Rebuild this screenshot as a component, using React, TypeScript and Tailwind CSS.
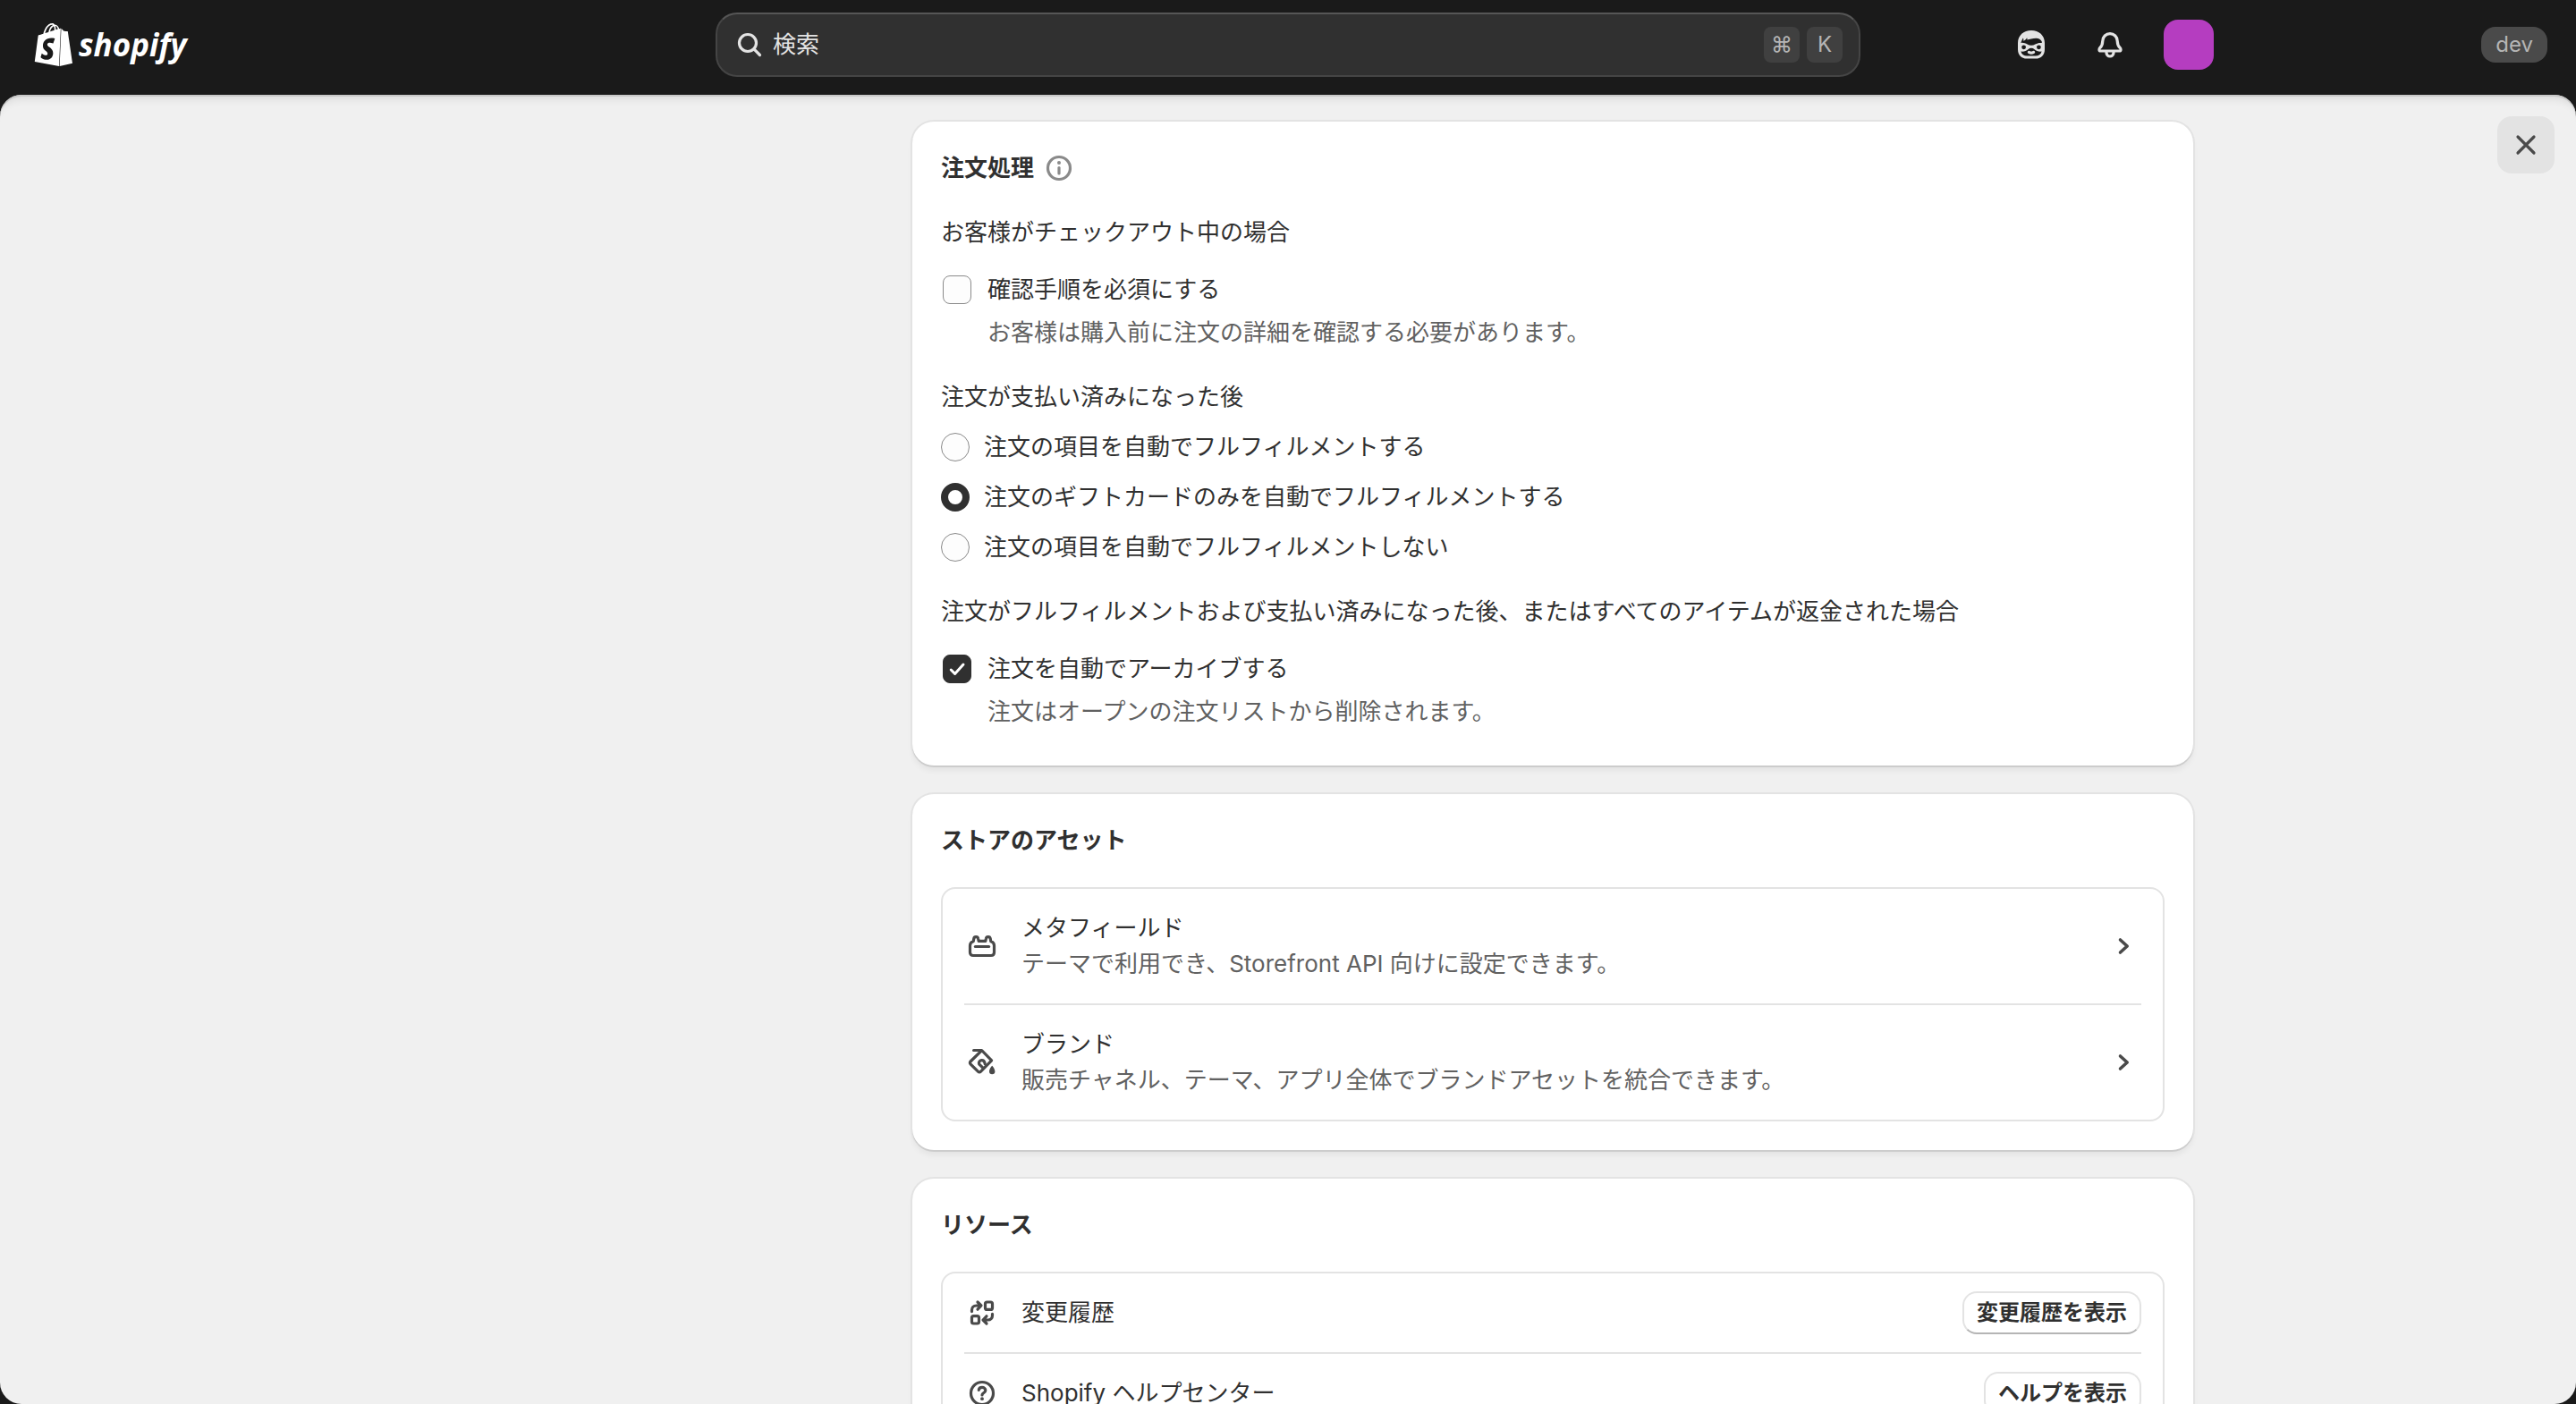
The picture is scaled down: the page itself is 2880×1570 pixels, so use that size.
import { useState } from "react";
import type { ReactNode } from "react";
import { SiShopify } from "react-icons/si";

const FULFILLMENT_OPTIONS = [
  { value: "all", label: "注文の項目を自動でフルフィルメントする" },
  { value: "gift-cards", label: "注文のギフトカードのみを自動でフルフィルメントする" },
  { value: "none", label: "注文の項目を自動でフルフィルメントしない" },
];

function Icon({ children, className = "" }: { children: ReactNode; className?: string }) {
  return (
    <svg
      viewBox="0 0 20 20"
      className={`w-10 h-10 shrink-0 ${className}`}
      fill="none"
      stroke="currentColor"
      strokeWidth="1.6"
      strokeLinecap="round"
      strokeLinejoin="round"
      aria-hidden="true"
    >
      {children}
    </svg>
  );
}

function SearchIcon() {
  return (
    <Icon>
      <circle cx="9" cy="9" r="4.75" />
      <path d="M12.6 12.6 15.75 15.75" />
    </Icon>
  );
}

function SidekickIcon() {
  return (
    <Icon>
      <path
        fill="currentColor"
        stroke="none"
        fillRule="evenodd"
        d="M10 2c4.3 0 7.5 2.8 7.5 7v3.6c0 3-2 5.2-5 5.2h-5c-3 0-5-2.2-5-5.2V9C2.5 4.800 5.700 2 10 2Z
          M4.100 8.900c.3-.5.6-1.500 1.300-2.700.300.500.300 1 .2 1.700.800-.3 1.500-.9 2-1.800.200.500.200.800.1 1.200 1.300-.2 3-.9 5-.9 1.600 0 2.600.7 3.200 1.900v.700c-1.400-.2-2.600.1-3.700.8-1.300.8-3.100.8-4.400 0C6.700 9.100 5.500 8.700 4.100 8.900Z
          M5.800 10.200a1.200 1.200 0 1 0 0 2.400 1.200 1.200 0 0 0 0-2.400Z
          M14.200 10.200a1.200 1.200 0 1 0 0 2.400 1.200 1.200 0 0 0 0-2.400Z
          M4.200 13.800c1.700.2 3-.3 4-1.200 1.100-.9 2.500-.9 3.600 0 1 .9 2.300 1.400 4 1.200-.4 1.600-1.700 2.500-3.500 2.500H7.700c-1.800 0-3.100-.9-3.500-2.500Z"
      />
      <path d="M8.700 14.200c.8.5 1.800.5 2.600 0" />
    </Icon>
  );
}

function BellIcon() {
  return (
    <Icon>
      <path d="M5.900 7.900a4.100 4.100 0 0 1 8.200 0c.1 2 .5 2.900 1.400 3.700.7.700.8 1.900-.3 1.900H4.800c-1.100 0-1-1.200-.3-1.900.9-.8 1.300-1.700 1.400-3.700Z" />
      <path d="M8 13.800v.7a2 2 0 0 0 4 0v-.7" />
    </Icon>
  );
}

function CloseIcon() {
  return (
    <Icon>
      <path d="M5.500 5.500l9 9M14.500 5.500l-9 9" />
    </Icon>
  );
}

function InfoIcon() {
  return (
    <Icon>
      <circle cx="10" cy="10" r="6.25" />
      <path d="M10 9.750v3.250" />
      <circle cx="10" cy="7" r="1" fill="currentColor" stroke="none" />
    </Icon>
  );
}

function MetafieldIcon() {
  return (
    <Icon>
      <path d="M5.100 7.400 5.400 5.800c.1-.6.5-1 1.100-1h.2c.6 0 1 .4 1.100 1l.3 1.400h3.800l.3-1.400c.1-.6.5-1 1.100-1h.2c.6 0 1 .4 1.100 1l.3 1.600c1.200.3 1.850 1.100 1.850 2.300v3.800c0 1.100-.7 1.750-1.750 1.750H5c-1.050 0-1.750-.65-1.750-1.750V9.700c0-1.200.65-2 1.850-2.300Z" />
      <path d="M6.200 10.250h7.600" />
    </Icon>
  );
}

function BrandIcon() {
  return (
    <Icon>
      <path d="M5.300 3.250h4.500l5.500 5.700-6 6.100c-.5.500-1.100.5-1.600 0L3.500 10.900c-.4-.4-.4-1 0-1.400l6.200-6.100" />
      <path d="M10.600 13.200 8.300 10.900c-.3-.9.300-2 1.300-2.100 1.100-.1 1.700.6 1.900 1.500l.1.600" />
      <path
        fill="currentColor"
        stroke="none"
        d="M15.600 11.900c.3 0 1.600 2.100 1.600 3.100a1.600 1.600 0 0 1-3.200 0c0-1 1.300-3.100 1.600-3.100Z"
      />
    </Icon>
  );
}

function ChangelogIcon() {
  return (
    <Icon>
      <rect x="11.75" y="4" width="4" height="4.2" rx="1" />
      <rect x="4.25" y="11.8" width="4" height="4.2" rx="1" />
      <path d="M4.250 9.300V8.500c0-1.500 1-2.500 2.500-2.500h2.500M7.500 4 9.500 6l-2 2.100" />
      <path d="M15.750 10.700v.8c0 1.500-1 2.500-2.500 2.500h-2.500M12.500 16l-2-2 2-2.100" />
    </Icon>
  );
}

function HelpIcon() {
  return (
    <Icon>
      <circle cx="10" cy="10" r="6.25" />
      <path d="M8.150 8.200c.1-1 .9-1.500 1.850-1.500 1.100 0 1.900.7 1.900 1.650 0 1.400-1.900 1.350-1.900 2.650" />
      <circle cx="10" cy="13.1" r=".95" fill="currentColor" stroke="none" />
    </Icon>
  );
}

function ChevronIcon() {
  return (
    <Icon>
      <path d="M8.250 6.500 12.100 10l-3.850 3.500" strokeWidth="1.8" />
    </Icon>
  );
}

function Header() {
  return (
    <header className="grid grid-cols-[1fr_minmax(0,1280px)_1fr] items-center pt-3.5 pb-5 text-[#e3e3e3]">
      <a href="#" aria-label="shopify" className="flex items-center gap-1 pl-9 text-white">
        <SiShopify className="w-12 h-12" />
        <span className="font-['Open_Sans',sans-serif] text-[35px] leading-[48px] font-bold italic">shopify</span>
      </a>

      {/* Search */}
      <div className="flex h-[72px] items-center gap-1.5 rounded-3xl border-2 border-[#454545] border-t-[#565656] bg-[#303030] pl-4 pr-[18px]">
        <SearchIcon />
        <input
          type="search"
          aria-label="検索"
          placeholder="検索"
          className="min-w-0 flex-1 bg-transparent outline-none placeholder:text-[#e3e3e3]"
        />
        <div className="flex gap-2 text-2xl text-[#b5b5b5]">
          <kbd className="flex h-10 w-10 items-center justify-center rounded-lg bg-[#404040] font-[Inter,sans-serif]">⌘</kbd>
          <kbd className="flex h-10 w-10 items-center justify-center rounded-lg bg-[#404040] font-[Inter,sans-serif]">K</kbd>
        </div>
      </div>

      <div className="flex items-center justify-between pl-[163px] pr-8">
        <div className="flex items-center gap-8">
          <button className="flex h-14 w-14 items-center justify-center" aria-label="Sidekick">
            <SidekickIcon />
          </button>
          <button className="flex h-14 w-14 items-center justify-center" aria-label="通知">
            <BellIcon />
          </button>
          <button className="h-14 w-14 rounded-2xl bg-[#b53dc0]" aria-label="アカウント" />
        </div>
        <span className="flex h-10 items-center rounded-2xl bg-[#4a4a4a] px-4 text-2xl text-[#b5b5b5]">dev</span>
      </div>
    </header>
  );
}

function Card({ title, info, children }: { title: string; info?: boolean; children: ReactNode }) {
  return (
    <section className="rounded-3xl bg-white p-8 shadow-[0_2px_0_0_#cccccc,0_0_0_2px_#e3e3e3,0_6px_6px_0_rgba(0,0,0,0.05)]">
      <div className="mb-8 flex items-center gap-2">
        <h2 className="font-bold">{title}</h2>
        {info && (
          <button className="text-[#8a8a8a]" aria-label="詳細">
            <InfoIcon />
          </button>
        )}
      </div>
      {children}
    </section>
  );
}

function Checkbox({ id, label, helpText, defaultChecked = false }: { id: string; label: string; helpText: string; defaultChecked?: boolean }) {
  const [checked, setChecked] = useState(defaultChecked);

  return (
    <div>
      <label htmlFor={id} className="flex items-center gap-4 py-2">
        <span className="grid w-9 place-items-center">
          <input
            id={id}
            type="checkbox"
            checked={checked}
            onChange={() => setChecked(!checked)}
            aria-describedby={`${id}-help`}
            className="col-start-1 row-start-1 h-8 w-8 appearance-none rounded-lg border border-[#8a8a8a] bg-[#fdfdfd] checked:border-[#303030] checked:bg-[#303030]"
          />
          {checked && (
            <svg viewBox="0 0 16 16" className="pointer-events-none col-start-1 row-start-1 h-8 w-8" fill="none" stroke="white" strokeWidth="1.5" strokeLinecap="round" strokeLinejoin="round">
              <path d="M4.600 8.500l2.200 2.200L11.500 5.500" />
            </svg>
          )}
        </span>
        {label}
      </label>
      <p id={`${id}-help`} className="pl-[52px] text-[#616161]">{helpText}</p>
    </div>
  );
}

function OrderProcessing() {
  const [fulfillment, setFulfillment] = useState("gift-cards");

  return (
    <Card title="注文処理" info>
      <div className="flex flex-col gap-8 pb-2">
        <div className="flex flex-col gap-4">
          <p>お客様がチェックアウト中の場合</p>
          <Checkbox id="confirm-step" label="確認手順を必須にする" helpText="お客様は購入前に注文の詳細を確認する必要があります。" />
        </div>

        <fieldset>
          <legend>注文が支払い済みになった後</legend>
          {FULFILLMENT_OPTIONS.map((option) => (
            <label key={option.value} className="mt-4 flex items-center gap-4">
              <input
                type="radio"
                name="fulfillment"
                value={option.value}
                checked={fulfillment === option.value}
                onChange={() => setFulfillment(option.value)}
                className="h-8 w-8 appearance-none rounded-full border border-[#8a8a8a] bg-[#fdfdfd] checked:border-8 checked:border-[#303030] checked:bg-white"
              />
              {option.label}
            </label>
          ))}
        </fieldset>

        <div className="flex flex-col gap-4">
          <p>注文がフルフィルメントおよび支払い済みになった後、またはすべてのアイテムが返金された場合</p>
          <Checkbox id="auto-archive" label="注文を自動でアーカイブする" helpText="注文はオープンの注文リストから削除されます。" defaultChecked />
        </div>
      </div>
    </Card>
  );
}

function AssetRow({ icon, title, description }: { icon: ReactNode; title: string; description: string }) {
  return (
    <a href="#" className="flex items-center py-6">
      <span className="mr-6 text-[#4a4a4a]">{icon}</span>
      <span className="flex-1">
        <span className="block">{title}</span>
        <span className="block text-[#616161]">{description}</span>
      </span>
      <span className="text-[#4a4a4a]">
        <ChevronIcon />
      </span>
    </a>
  );
}

function ResourceRow({ icon, title, action }: { icon: ReactNode; title: string; action: string }) {
  return (
    <div className="flex items-center py-5">
      <span className="mr-6 text-[#4a4a4a]">{icon}</span>
      <span className="flex-1">{title}</span>
      <button className="h-12 rounded-2xl border-2 border-[#e3e3e3] border-b-[#b5b5b5] bg-white px-3.5 text-2xl leading-10 font-bold">
        {action}
      </button>
    </div>
  );
}

function List({ children }: { children: ReactNode }) {
  return <div className="divide-y-2 divide-[#e3e3e3] rounded-2xl border-2 border-[#e3e3e3] px-6">{children}</div>;
}

export default function App() {
  return (
    <div className="flex h-screen flex-col overflow-hidden bg-[#1a1a1a] font-[Inter,'Noto_Sans_CJK_JP',sans-serif] text-[26px] leading-10 text-[#303030]" lang="ja">
      <Header />

      <main className="relative min-h-0 flex-1 overflow-hidden rounded-3xl bg-[#f0f0f0] shadow-[inset_0_2px_0_#c8c8c8,inset_0_14px_12px_-12px_rgba(0,0,0,0.14)]">
        <button className="absolute top-6 right-6 flex h-16 w-16 items-center justify-center rounded-2xl bg-[#e3e3e3] text-[#4a4a4a]" aria-label="閉じる">
          <CloseIcon />
        </button>

        <div className="mx-auto flex max-w-[2024px] flex-col gap-8 pt-[30px] pl-[592px]">
          <OrderProcessing />

          <Card title="ストアのアセット">
            <List>
              <AssetRow icon={<MetafieldIcon />} title="メタフィールド" description="テーマで利用でき、Storefront API 向けに設定できます。" />
              <AssetRow icon={<BrandIcon />} title="ブランド" description="販売チャネル、テーマ、アプリ全体でブランドアセットを統合できます。" />
            </List>
          </Card>

          <Card title="リソース">
            <List>
              <ResourceRow icon={<ChangelogIcon />} title="変更履歴" action="変更履歴を表示" />
              <ResourceRow icon={<HelpIcon />} title="Shopify ヘルプセンター" action="ヘルプを表示" />
            </List>
          </Card>
        </div>
      </main>
    </div>
  );
}
